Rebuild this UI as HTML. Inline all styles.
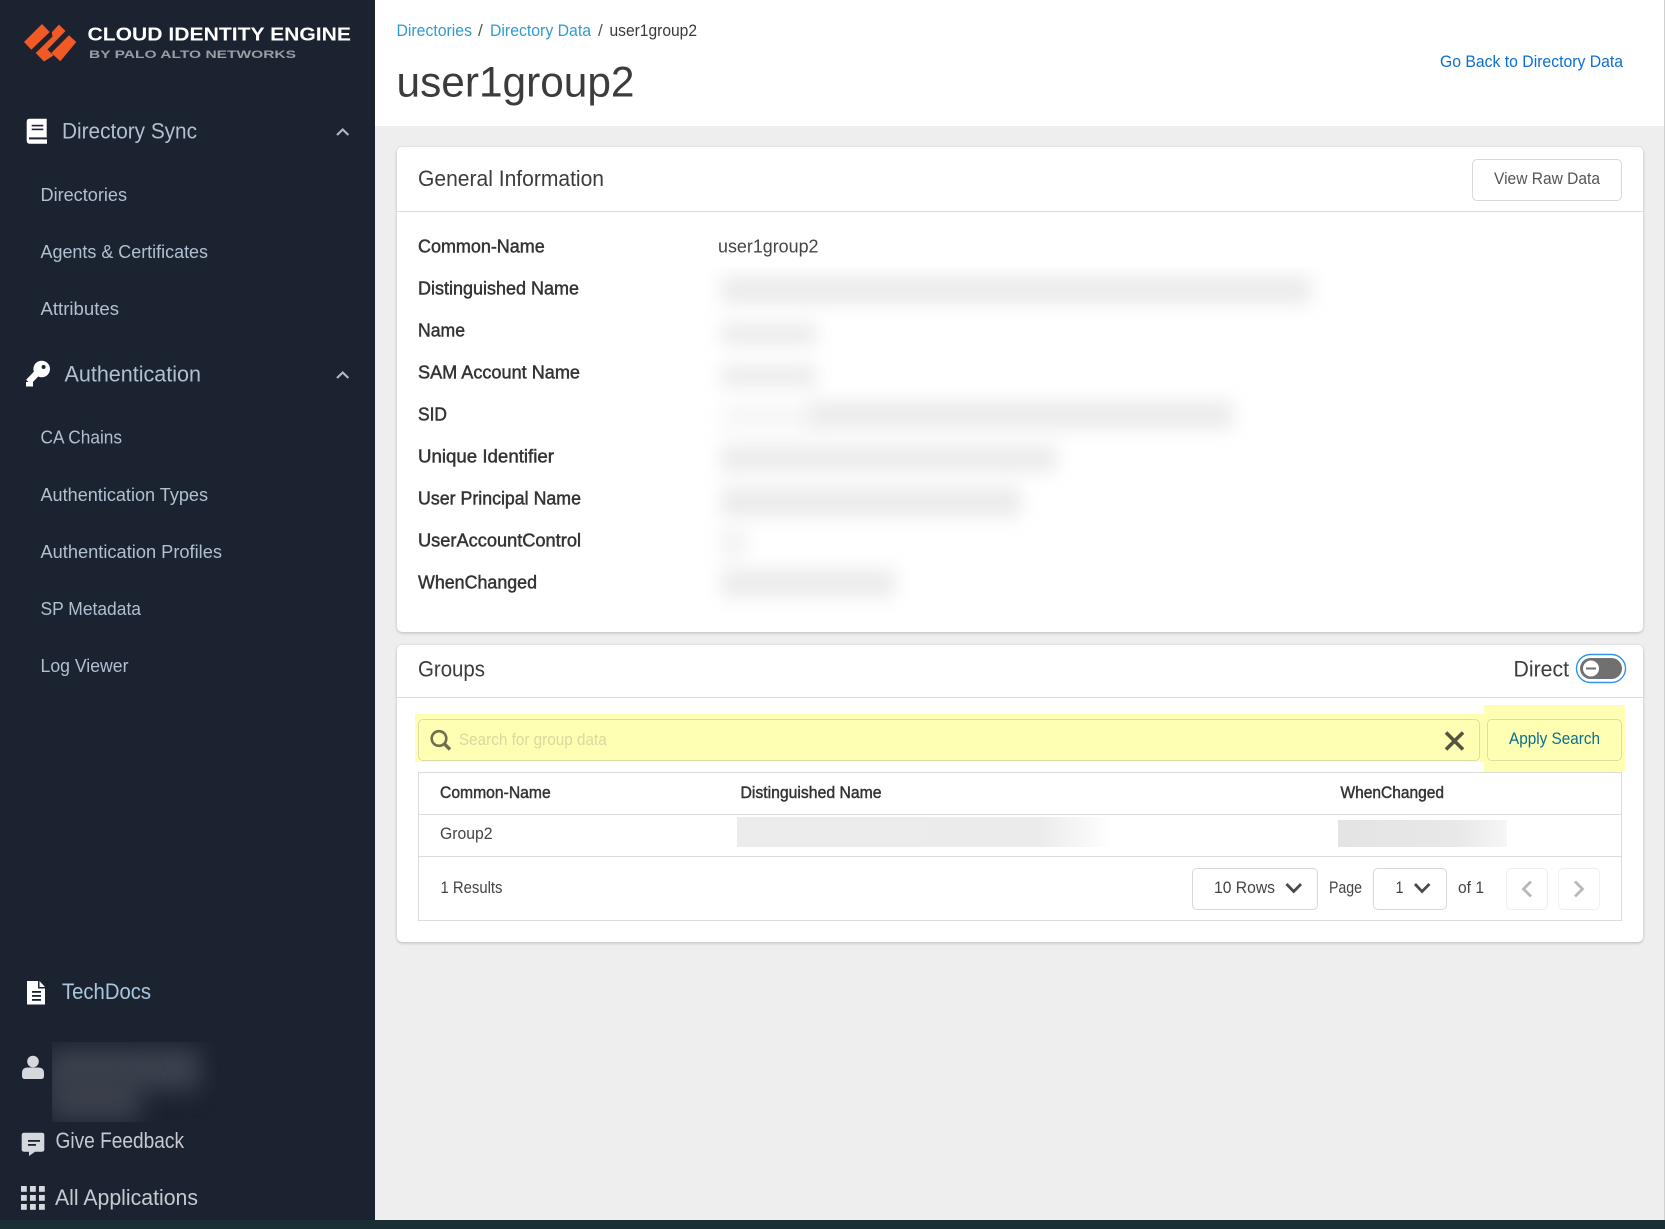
<!DOCTYPE html>
<html lang="en">
<head>
<meta charset="utf-8">
<title>user1group2</title>
<style>
html,body{margin:0;padding:0;background:#eee}
#p{position:relative;width:1665px;height:1229px;overflow:hidden;background:#eeeeee;font-family:"Liberation Sans",sans-serif}
#p div{position:absolute;box-sizing:border-box}
.card{background:#fff;border-radius:5px;box-shadow:0 1px 3px rgba(0,0,0,.22)}
.line{background:#dcdcdc;height:1px}
.btn{border:1px solid #d8d8d8;border-radius:5px}
.blur{background:#ebebeb;filter:blur(9px)}
svg{position:absolute;left:0;top:0}
text{font-family:"Liberation Sans",sans-serif;white-space:pre}
.b{fill:#333;stroke:#333;stroke-width:.45px}
.nav{fill:#b0c0d0}
.s{font-size:18px}
.m{font-size:22px}
.d{fill:#444;font-size:17px}
</style>
</head>
<body>
<div id="p">
  <div style="left:375px;top:0;width:1290px;height:126px;background:#fff"></div>
  <div style="left:0;top:0;width:375px;height:1229px;background:#1b2230"></div>

  <div class="card" style="left:397px;top:147px;width:1246px;height:485px"></div>
  <div class="line" style="left:397px;top:211px;width:1246px"></div>
  <div class="btn" style="left:1472px;top:159px;width:150px;height:42px;background:#fff"></div>

  <div style="left:697px;top:267px;width:640px;height:347px;overflow:hidden;background:#fff">
    <div class="blur" style="left:24px;top:9px;width:590px;height:28px"></div>
    <div class="blur" style="left:24px;top:56px;width:96px;height:22px"></div>
    <div class="blur" style="left:24px;top:98px;width:96px;height:22px"></div>
    <div class="blur" style="left:24px;top:136px;width:95px;height:28px;opacity:.4"></div>
    <div class="blur" style="left:112px;top:134px;width:424px;height:28px"></div>
    <div class="blur" style="left:24px;top:178px;width:336px;height:27px"></div>
    <div class="blur" style="left:24px;top:220px;width:300px;height:30px"></div>
    <div class="blur" style="left:24px;top:261px;width:26px;height:30px;opacity:.6"></div>
    <div class="blur" style="left:24px;top:302px;width:174px;height:28px"></div>
  </div>

  <div class="card" style="left:397px;top:645px;width:1246px;height:297px"></div>
  <div class="line" style="left:397px;top:697px;width:1246px"></div>

  <div style="left:415px;top:714px;width:1075px;height:48px;background:#ffffb3"></div>
  <div style="left:1484px;top:705px;width:141px;height:67px;background:#ffffb3"></div>
  <div style="left:418px;top:719px;width:1062px;height:42px;border:1px solid #dcdca6;border-radius:5px"></div>
  <div style="left:1487px;top:719px;width:135px;height:42px;border:1px solid #dcdca6;border-radius:5px"></div>

  <div style="left:418px;top:772px;width:1204px;height:149px;border:1px solid #dcdcdc"></div>
  <div class="line" style="left:418px;top:814px;width:1204px"></div>
  <div class="line" style="left:418px;top:856px;width:1204px"></div>
  <div style="left:737px;top:817px;width:376px;height:30px;background:linear-gradient(90deg,#ececec 0,#ebebeb 80%,#fff 100%)"></div>
  <div style="left:1338px;top:820px;width:169px;height:27px;background:linear-gradient(90deg,#e4e4e4 0,#e8e8e8 70%,#f6f6f6 100%)"></div>

  <div class="btn" style="left:1192px;top:868px;width:126px;height:42px"></div>
  <div class="btn" style="left:1373px;top:868px;width:74px;height:42px"></div>
  <div class="btn" style="left:1506px;top:868px;width:42px;height:42px;border-color:#efefef"></div>
  <div class="btn" style="left:1558px;top:868px;width:42px;height:42px;border-color:#efefef"></div>

  <div style="left:52px;top:1042px;width:165px;height:80px;overflow:hidden;background:#1b2230">
    <div style="left:-4px;top:6px;width:152px;height:42px;background:#3c424e;filter:blur(12px)"></div>
    <div style="left:-4px;top:30px;width:92px;height:50px;background:#393f4b;filter:blur(12px)"></div>
  </div>

  <div style="left:0;top:1220px;width:1665px;height:9px;background:#1a2f34"></div>
  <div style="left:1664px;top:0;width:1px;height:1220px;background:#cfcfcf"></div>

  <svg width="1665" height="1229" viewBox="0 0 1665 1229" xmlns="http://www.w3.org/2000/svg">
    <!-- logo -->
    <g fill="#f15a24">
      <polygon points="24,42 42,24 49.7,32 31.3,49.7"/>
      <polygon points="51.8,32.3 59,24.5 65.5,31 47.5,49.5 53.5,55.5 44,61.5 35.7,53 52.5,36.5"/>
      <polygon points="60.3,61.3 76.3,42 69,35.3 51.3,53"/>
    </g>
    <text x="87.5" y="40.7" textLength="263.5" lengthAdjust="spacingAndGlyphs" font-size="18" font-weight="bold" fill="#fff">CLOUD IDENTITY ENGINE</text>
    <text x="89" y="58" textLength="207" lengthAdjust="spacingAndGlyphs" font-size="11" font-weight="bold" fill="#9a9da3">BY PALO ALTO NETWORKS</text>

    <!-- book -->
    <path fill="#fff" d="M29.5 118.7H46.7V137H47V143.7H29.5Q26.7 143.7 26.7 140.5V121.7Q26.7 118.7 29.5 118.7Z"/>
    <rect x="31.7" y="124.8" width="11.6" height="1.6" fill="#1b2230"/>
    <rect x="31.7" y="128.6" width="11.6" height="1.6" fill="#1b2230"/>
    <rect x="29" y="137.4" width="18" height="2" fill="#1b2230"/>
    <text x="62" y="138.5" textLength="135" lengthAdjust="spacingAndGlyphs" class="m nav">Directory Sync</text>
    <path d="M337 135L342.7 129.5L348.4 135" fill="none" stroke="#b0b8c2" stroke-width="2.2"/>

    <text x="40.5" y="201" textLength="86.5" lengthAdjust="spacingAndGlyphs" class="s nav">Directories</text>
    <text x="40.5" y="258" textLength="167.5" lengthAdjust="spacingAndGlyphs" class="s nav">Agents &amp; Certificates</text>
    <text x="40.5" y="315" textLength="78.5" lengthAdjust="spacingAndGlyphs" class="s nav">Attributes</text>

    <!-- key -->
    <circle cx="41.7" cy="369" r="8.3" fill="#fff"/>
    <path d="M38 372L28.5 382" stroke="#fff" stroke-width="6.5" fill="none"/>
    <rect x="26" y="382" width="7" height="4.5" fill="#fff"/>
    <circle cx="43.6" cy="367" r="2" fill="#1b2230"/>
    <text x="64.5" y="381.5" textLength="136.5" lengthAdjust="spacingAndGlyphs" class="m nav">Authentication</text>
    <path d="M337 378L342.7 372.5L348.4 378" fill="none" stroke="#b0b8c2" stroke-width="2.2"/>

    <text x="40.5" y="443.5" textLength="81.5" lengthAdjust="spacingAndGlyphs" class="s nav">CA Chains</text>
    <text x="40.5" y="501" textLength="167.5" lengthAdjust="spacingAndGlyphs" class="s nav">Authentication Types</text>
    <text x="40.5" y="558" textLength="181.5" lengthAdjust="spacingAndGlyphs" class="s nav">Authentication Profiles</text>
    <text x="40.5" y="615" textLength="100.5" lengthAdjust="spacingAndGlyphs" class="s nav">SP Metadata</text>
    <text x="40.5" y="672" textLength="88" lengthAdjust="spacingAndGlyphs" class="s nav">Log Viewer</text>

    <!-- doc -->
    <path fill="#fff" d="M27 981H38V988.5H45V1004.5H27Z"/>
    <path fill="#fff" d="M39.5 981L45 987H39.5Z"/>
    <rect x="32" y="991" width="9" height="1.8" fill="#1b2230"/>
    <rect x="32" y="995" width="9" height="1.8" fill="#1b2230"/>
    <rect x="32" y="999" width="9" height="1.8" fill="#1b2230"/>
    <text x="62" y="999" textLength="89" lengthAdjust="spacingAndGlyphs" class="m" fill="#a9c6de">TechDocs</text>

    <!-- user -->
    <circle cx="33" cy="1061.5" r="5.8" fill="#d5d8dc"/>
    <path fill="#d5d8dc" d="M22 1076V1073Q22 1067.5 28 1067.5H38Q44 1067.5 44 1073V1076Q44 1079 41 1079H25Q22 1079 22 1076Z"/>

    <!-- feedback -->
    <path fill="#d5d8dc" d="M24 1132.7H42Q44.3 1132.7 44.3 1135V1149.5Q44.3 1151.7 42 1151.7H35L29 1156V1151.7H24Q21.7 1151.7 21.7 1149.5V1135Q21.7 1132.7 24 1132.7Z"/>
    <rect x="28" y="1140" width="12" height="1.8" fill="#1b2230"/>
    <rect x="28" y="1144" width="8" height="1.8" fill="#1b2230"/>
    <text x="55.5" y="1148" textLength="128.5" lengthAdjust="spacingAndGlyphs" class="m" fill="#c6cad0">Give Feedback</text>

    <!-- grid -->
    <g fill="#d5d8dc">
      <rect x="21" y="1186" width="5.8" height="5.8"/><rect x="30" y="1186" width="5.8" height="5.8"/><rect x="39" y="1186" width="5.8" height="5.8"/>
      <rect x="21" y="1195" width="5.8" height="5.8"/><rect x="30" y="1195" width="5.8" height="5.8"/><rect x="39" y="1195" width="5.8" height="5.8"/>
      <rect x="21" y="1204" width="5.8" height="5.8"/><rect x="30" y="1204" width="5.8" height="5.8"/><rect x="39" y="1204" width="5.8" height="5.8"/>
    </g>
    <text x="55" y="1205" textLength="143" lengthAdjust="spacingAndGlyphs" class="m" fill="#c6cad0">All Applications</text>

    <!-- header -->
    <text x="396.5" y="36" textLength="75.5" lengthAdjust="spacingAndGlyphs" font-size="17" fill="#2f9bd0">Directories</text>
    <text x="478" y="36" font-size="17" fill="#555">/</text>
    <text x="490" y="36" textLength="101" lengthAdjust="spacingAndGlyphs" font-size="17" fill="#2f9bd0">Directory Data</text>
    <text x="598" y="36" font-size="17" fill="#555">/</text>
    <text x="609.5" y="36" textLength="87.5" lengthAdjust="spacingAndGlyphs" font-size="17" fill="#3a3a3a">user1group2</text>
    <text x="396.5" y="96.5" textLength="238" lengthAdjust="spacingAndGlyphs" font-size="43" fill="#3c3c3c">user1group2</text>
    <text x="1440" y="67" textLength="183" lengthAdjust="spacingAndGlyphs" font-size="17" fill="#0b6fd0">Go Back to Directory Data</text>

    <!-- general info -->
    <text x="418" y="186" textLength="186" lengthAdjust="spacingAndGlyphs" font-size="22" fill="#3c3c3c">General Information</text>
    <text x="1494" y="184" textLength="106" lengthAdjust="spacingAndGlyphs" font-size="17" fill="#555">View Raw Data</text>

    <text x="418" y="252.5" textLength="126.7" lengthAdjust="spacingAndGlyphs" class="s b">Common-Name</text>
    <text x="718" y="252.5" textLength="100.5" lengthAdjust="spacingAndGlyphs" class="s" fill="#444">user1group2</text>
    <text x="418" y="294.5" textLength="161" lengthAdjust="spacingAndGlyphs" class="s b">Distinguished Name</text>
    <text x="418" y="336.5" textLength="47" lengthAdjust="spacingAndGlyphs" class="s b">Name</text>
    <text x="418" y="378.5" textLength="162" lengthAdjust="spacingAndGlyphs" class="s b">SAM Account Name</text>
    <text x="418" y="420.5" textLength="29" lengthAdjust="spacingAndGlyphs" class="s b">SID</text>
    <text x="418" y="462.5" textLength="136" lengthAdjust="spacingAndGlyphs" class="s b">Unique Identifier</text>
    <text x="418" y="504.5" textLength="163" lengthAdjust="spacingAndGlyphs" class="s b">User Principal Name</text>
    <text x="418" y="546.5" textLength="163" lengthAdjust="spacingAndGlyphs" class="s b">UserAccountControl</text>
    <text x="418" y="588.5" textLength="119" lengthAdjust="spacingAndGlyphs" class="s b">WhenChanged</text>

    <!-- groups -->
    <text x="418" y="676.5" textLength="67" lengthAdjust="spacingAndGlyphs" font-size="22" fill="#3c3c3c">Groups</text>
    <text x="1513.5" y="676.5" textLength="55.5" lengthAdjust="spacingAndGlyphs" font-size="22" fill="#3c3c3c">Direct</text>
    <rect x="1576.5" y="654.5" width="49" height="28" rx="14" fill="#fff" stroke="#2f95ea" stroke-width="1.4"/>
    <rect x="1580" y="658" width="42" height="21" rx="10.5" fill="#707070"/>
    <circle cx="1591" cy="668.5" r="8" fill="#fff"/>
    <rect x="1586" y="667.5" width="10" height="2" fill="#707070"/>

    <circle cx="439" cy="738.5" r="7.3" fill="none" stroke="#6e6e52" stroke-width="2.6"/>
    <path d="M444.5 744L450 749.5" stroke="#6e6e52" stroke-width="3.4" fill="none"/>
    <text x="459" y="745" textLength="147.7" lengthAdjust="spacingAndGlyphs" font-size="17" fill="#d9d9a0">Search for group data</text>
    <path d="M1446 732.5L1463 749.5M1463 732.5L1446 749.5" stroke="#55553f" stroke-width="3.6" fill="none"/>
    <text x="1509" y="744" textLength="91" lengthAdjust="spacingAndGlyphs" font-size="17" fill="#0a6f8f">Apply Search</text>

    <text x="440" y="798" textLength="110.7" lengthAdjust="spacingAndGlyphs" font-size="16.5" class="b">Common-Name</text>
    <text x="740.5" y="798" textLength="141" lengthAdjust="spacingAndGlyphs" font-size="16.5" class="b">Distinguished Name</text>
    <text x="1340.5" y="798" textLength="103.5" lengthAdjust="spacingAndGlyphs" font-size="16.5" class="b">WhenChanged</text>
    <text x="440" y="839" textLength="52.5" lengthAdjust="spacingAndGlyphs" class="d">Group2</text>
    <text x="440.5" y="893" textLength="62" lengthAdjust="spacingAndGlyphs" class="d">1 Results</text>
    <text x="1214" y="893" textLength="61" lengthAdjust="spacingAndGlyphs" class="d">10 Rows</text>
    <path d="M1286.5 884L1293.7 891.5L1301 884" fill="none" stroke="#4a4a4a" stroke-width="2.8"/>
    <text x="1329" y="893" textLength="33" lengthAdjust="spacingAndGlyphs" class="d">Page</text>
    <text x="1395.5" y="893" textLength="8" lengthAdjust="spacingAndGlyphs" class="d">1</text>
    <path d="M1415 884L1422 891.5L1429.5 884" fill="none" stroke="#4a4a4a" stroke-width="2.8"/>
    <text x="1458" y="893" textLength="26" lengthAdjust="spacingAndGlyphs" class="d">of 1</text>
    <path d="M1531 881.5L1523.5 889L1531 896.5" fill="none" stroke="#b8b8b8" stroke-width="2.8"/>
    <path d="M1575 881.5L1582.5 889L1575 896.5" fill="none" stroke="#b8b8b8" stroke-width="2.8"/>
  </svg>
</div>
</body>
</html>
